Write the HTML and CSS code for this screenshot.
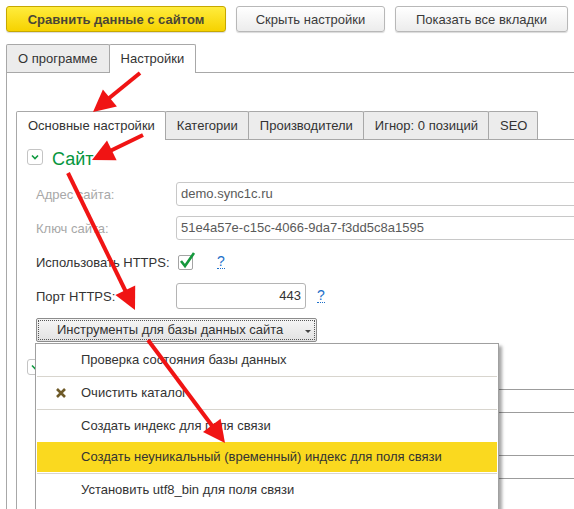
FILE: index.html
```html
<!DOCTYPE html>
<html lang="ru">
<head>
    <meta charset="UTF-8">
    <title>Настройки обмена с сайтом</title>
    <link rel="stylesheet" href="styles.css">
</head>
<body>

    <div class="toolbar">
        <button class="btn btn-primary">Сравнить данные с сайтом</button>
        <button class="btn btn-hide">Скрыть настройки</button>
        <button class="btn btn-all">Показать все вкладки</button>
    </div>

    <div class="main-tabs">
        <div class="tab-strip">
            <div class="tab">О программе</div>
            <div class="tab active">Настройки</div>
        </div>

        <div class="main-panel">
            <div class="tab-strip">
                <div class="tab active">Основные настройки</div>
                <div class="tab">Категории</div>
                <div class="tab">Производители</div>
                <div class="tab">Игнор: 0 позиций</div>
                <div class="tab">SEO</div>
            </div>

            <div class="sub-panel">
                <div class="group-head">
                    <span class="collapse">
                        <svg width="8" height="6" viewBox="0 0 8 6"><path d="M1 1.5 L4 4.5 L7 1.5" fill="none" stroke="#109a40" stroke-width="1.6"/></svg>
                    </span>
                    <span class="group-title">Сайт</span>
                </div>

                <div class="form-row first disabled">
                    <label>Адрес сайта:</label>
                    <div class="field wide">demo.sync1c.ru</div>
                </div>
                <div class="form-row disabled">
                    <label>Ключ сайта:</label>
                    <div class="field wide">51e4a57e-c15c-4066-9da7-f3dd5c8a1595</div>
                </div>
                <div class="form-row">
                    <label>Использовать HTTPS:</label>
                    <span class="checkbox">
                        <svg width="18" height="18" viewBox="0 0 18 18"><path d="M3 9 L7 14 L16 1" fill="none" stroke="#14983c" stroke-width="2.6"/></svg>
                    </span>
                    <a class="help help-check">?</a>
                </div>
                <div class="form-row">
                    <label>Порт HTTPS:</label>
                    <div class="field port">443</div>
                    <a class="help help-port">?</a>
                </div>

                <div class="dropdown">
                    <button class="dd-btn">
                        <span class="dd-text">Инструменты для базы данных сайта</span>
                        <span class="caret"></span>
                    </button>
                    <div class="menu">
                        <div class="menu-item">Проверка состояния базы данных</div>
                        <div class="menu-sep"></div>
                        <div class="menu-item">
                            <svg class="menu-icon" width="12" height="12" viewBox="0 0 12 12"><path d="M2 2 L10 10 M10 2 L2 10" stroke="#6e5a28" stroke-width="2.6"/></svg>
                            Очистить каталог
                        </div>
                        <div class="menu-sep"></div>
                        <div class="menu-item">Создать индекс для поля связи</div>
                        <div class="menu-item selected">Создать неуникальный (временный) индекс для поля связи</div>
                        <div class="menu-sep gap"></div>
                        <div class="menu-item">Установить utf8_bin для поля связи</div>
                    </div>
                </div>

                <!-- next group, mostly hidden under the popup menu -->
                <div class="group-head second">
                    <span class="collapse">
                        <svg width="8" height="6" viewBox="0 0 8 6"><path d="M1 1.5 L4 4.5 L7 1.5" fill="none" stroke="#109a40" stroke-width="1.6"/></svg>
                    </span>
                </div>
                <div class="form-row under">
                    <label></label>
                    <div class="field wide"></div>
                </div>
                <div class="form-row under far">
                    <label></label>
                    <div class="field wide"></div>
                </div>
            </div>
        </div>
    </div>

    <!-- red arrows drawn over the screenshot -->
    <svg class="annotations" width="574" height="509" viewBox="0 0 574 509">
        <g stroke="#f01414" stroke-width="4" fill="#f01414">
            <line x1="140" y1="73" x2="108" y2="99"/>
            <polygon points="93,112 116.9,106.4 102.9,89.4" stroke="none"/>
            <line x1="143" y1="135" x2="110" y2="151"/>
            <polygon points="92,160 116.6,160.2 107,140.4" stroke="none"/>
            <line x1="68" y1="173" x2="126" y2="292"/>
            <polygon points="135,310 115.4,295 135.2,285.4" stroke="none"/>
            <line x1="148" y1="340" x2="213" y2="427"/>
            <polygon points="225,443 203,432 220.6,418.8" stroke="none"/>
        </g>
    </svg>

</body>
</html>
```

FILE: styles.css
```css
body {
    margin: 0;
    width: 574px;
    height: 509px;
    overflow: hidden;
    position: relative;
    background: #fff;
    font-family: "Liberation Sans", Arial, sans-serif;
    font-size: 13px;
    color: #333;
}
.toolbar {
    display: flex;
    gap: 10px;
    padding: 6px 0 0 6px;
}
.btn {
    height: 26px;
    padding: 0;
    white-space: nowrap;
    border: 1px solid #b8b8b8;
    border-radius: 3px;
    background: linear-gradient(#ffffff, #ececec);
    box-shadow: 0 1px 1px rgba(0, 0, 0, 0.15);
    font-family: inherit;
    font-size: 13px;
    color: #3a3a3a;
}
.btn-primary {
    width: 220px;
    border-color: #c6a800;
    background: linear-gradient(#ffec3d, #f6d200);
    font-weight: bold;
    color: #4a4636;
}
.btn-hide {
    width: 149px;
}
.btn-all {
    width: 173px;
}

/* tabs */
.main-tabs {
    margin-top: 12px;
    margin-left: 6px;
}
.tab-strip {
    display: flex;
    border-bottom: 1px solid #a8a8a8;
}
.tab {
    height: 27px;
    line-height: 27px;
    padding: 0 11px;
    white-space: nowrap;
    border: 1px solid #a8a8a8;
    border-bottom: none;
    border-radius: 2px 2px 0 0;
    background: #ececec;
    margin-bottom: -1px;
    margin-left: -1px;
}
.tab:first-child {
    margin-left: 0;
}
.tab.active {
    background: #fff;
    height: 28px;
}
.main-panel {
    border-left: 1px solid #a8a8a8;
    padding: 38px 0 0 9px;
}
.main-panel .tab {
    padding: 0 10px 0 11px;
}
.sub-panel {
    border-left: 1px solid #a8a8a8;
    padding: 9px 0 0 10px;
    height: 400px;
}

/* groups */
.group-head {
    display: flex;
    align-items: center;
    height: 16px;
}
.group-head.second {
    margin-top: 17px;
}
.collapse {
    width: 14px;
    height: 14px;
    border: 1px solid #c4c4c4;
    border-radius: 3px;
    display: flex;
    align-items: center;
    justify-content: center;
    background: #fff;
}
.group-title {
    margin-left: 9px;
    font-size: 18px;
    color: #06963e;
    position: relative;
    top: 2px;
}

/* form rows */
.form-row {
    display: flex;
    align-items: center;
    height: 24px;
    margin-top: 10px;
    padding-left: 9px;
}
.form-row.first {
    margin-top: 17px;
}
.form-row.under {
    margin-top: 14px;
}
.form-row.under.far {
    margin-top: 42px;
}
.form-row label {
    width: 140px;
    flex-shrink: 0;
}
.form-row.disabled label {
    color: #a8a8a8;
}
.field {
    height: 22px;
    line-height: 22px;
    border: 1px solid #c8c8c8;
    border-radius: 3px;
    padding: 0 4px;
    color: #5a5a5a;
    background: #fff;
    flex-shrink: 0;
}
.field.wide {
    width: 420px;
}
.form-row.under .field {
    border-color: #9c9c9c;
}
.field.port {
    width: 120px;
    height: 24px;
    line-height: 24px;
    text-align: right;
    color: #333;
    border-color: #b4b4b4;
}
.checkbox {
    position: relative;
    width: 13px;
    height: 13px;
    margin-left: 2px;
    border: 1px solid #a4a4a4;
    border-radius: 2px;
}
.checkbox svg {
    position: absolute;
    left: -1px;
    top: -4px;
}
.help {
    color: #1d6fc9;
    border-bottom: 1px dotted #1d6fc9;
    line-height: 13px;
    font-size: 14px;
}
.help-check {
    margin-left: 24px;
}
.help-port {
    margin-left: 11px;
}

/* dropdown with tools menu */
.dropdown {
    position: relative;
    margin-top: 10px;
    margin-left: 9px;
    width: 281px;
}
.dd-btn {
    display: flex;
    align-items: center;
    width: 281px;
    height: 24px;
    padding: 0 0 0 2px;
    border: 1px solid #8c8c8c;
    border-radius: 2px;
    background: linear-gradient(#f6f6f6, #e2e2e2);
    font-family: inherit;
    font-size: 13px;
    color: #333;
}
.dd-text {
    flex: 1;
    text-align: left;
    height: 18px;
    line-height: 18px;
    padding-left: 18px;
    outline: 1px dotted #555;
    margin-right: 2px;
}
.caret {
    position: absolute;
    right: 6px;
    top: 12px;
    border-left: 3px solid transparent;
    border-right: 3px solid transparent;
    border-top: 3px solid #444;
}
.menu {
    position: absolute;
    left: -1px;
    top: 25px;
    width: 462px;
    height: 200px;
    border: 1px solid #a0a0a0;
    background: #fff;
    box-shadow: 3px 3px 3px rgba(0, 0, 0, 0.35);
    z-index: 5;
}
.menu-item {
    position: relative;
    height: 32px;
    line-height: 32px;
    padding-left: 44px;
    margin: 0 1px;
}
.menu-item.selected {
    background: #fad91f;
    height: 30px;
    line-height: 30px;
}
.menu-icon {
    position: absolute;
    left: 18px;
    top: 10px;
}
.menu-sep {
    height: 1px;
    margin: 0 1px;
    background: #d8d5ce;
}
.menu-sep.gap {
    margin-top: 1px;
}

.annotations {
    position: absolute;
    left: 0;
    top: 0;
    pointer-events: none;
    z-index: 10;
}
```
